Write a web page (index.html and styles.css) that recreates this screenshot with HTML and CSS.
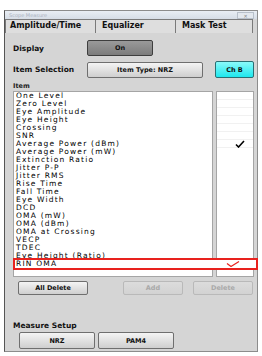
FILE: index.html
```html
<!DOCTYPE html>
<html lang="en">

<head>
    <meta charset="UTF-8">
    <title>Scope Measure</title>
    <link rel="stylesheet" href="styles.css">
</head>

<body>
    <div class="window">
        <!-- Title bar -->
        <div class="titlebar">
            <span class="title">Scope Measure</span>
            <span class="close">&#x2715;</span>
        </div>

        <!-- Tabs -->
        <div class="tabs">
            <div class="tab active">Amplitude/Time</div>
            <div class="tab">Equalizer</div>
            <div class="tab">Mask Test</div>
        </div>

        <div class="content">
            <div class="row">
                <span class="label">Display</span>
                <span class="btn btn-on">On</span>
            </div>

            <div class="row row-sel">
                <span class="label">Item Selection</span>
                <span class="btn btn-type">Item Type: NRZ</span>
                <span class="btn btn-ch">Ch B</span>
            </div>

            <div class="small-label">Item</div>

            <div class="list-area">
                <div class="list">
                    <div class="item">One Level</div>
                    <div class="item">Zero Level</div>
                    <div class="item">Eye Amplitude</div>
                    <div class="item">Eye Height</div>
                    <div class="item">Crossing</div>
                    <div class="item">SNR</div>
                    <div class="item">Average Power (dBm)</div>
                    <div class="item">Average Power (mW)</div>
                    <div class="item">Extinction Ratio</div>
                    <div class="item">Jitter P-P</div>
                    <div class="item">Jitter RMS</div>
                    <div class="item">Rise Time</div>
                    <div class="item">Fall Time</div>
                    <div class="item">Eye Width</div>
                    <div class="item">DCD</div>
                    <div class="item">OMA (mW)</div>
                    <div class="item">OMA (dBm)</div>
                    <div class="item">OMA at Crossing</div>
                    <div class="item">VECP</div>
                    <div class="item">TDEC</div>
                    <div class="item">Eye Height (Ratio)</div>
                </div>
                <div class="checks">
                    <div class="check-row"></div>
                    <div class="check-row"></div>
                    <div class="check-row"></div>
                    <div class="check-row"></div>
                    <div class="check-row"></div>
                    <div class="check-row"></div>
                    <div class="check-row">
                        <svg width="10" height="8" viewBox="0 0 10 8">
                            <path d="M1 4.5 L3.5 7 L9 1" fill="none" stroke="#000" stroke-width="1.6" />
                        </svg>
                    </div>
                </div>

                <!-- highlighted row drawn over the list -->
                <div class="marked">
                    <span class="item">RIN OMA</span>
                    <svg class="red-check" width="14" height="6" viewBox="0 0 14 6">
                        <path d="M1 2.5 L5 5.5 L13 0.5" fill="none" stroke="#e8221e" stroke-width="1.2" />
                    </svg>
                </div>
            </div>

            <div class="actions">
                <span class="btn btn-alldel">All Delete</span>
                <span class="btn btn-add disabled">Add</span>
                <span class="btn btn-del disabled">Delete</span>
            </div>

            <div class="label setup-label">Measure Setup</div>

            <div class="setup">
                <span class="btn btn-setup">NRZ</span>
                <span class="btn btn-setup">PAM4</span>
            </div>
        </div>
    </div>
</body>

</html>
```

FILE: styles.css
```css
* {
    margin: 0;
    padding: 0;
    box-sizing: border-box;
}

body {
    font-family: "DejaVu Sans", sans-serif;
    background-color: #fff;
}

.window {
    margin: 10px 0 0 4px;
    width: 254px;
    height: 342px;
    background-color: #d5d5d5;
    border: 1px solid #8c8c8c;
    border-left-color: #555;
    display: flex;
    flex-direction: column;
}

.titlebar {
    height: 8px;
    display: flex;
    align-items: center;
    justify-content: space-between;
    background: linear-gradient(#e9eef4, #d6dde6);
    padding: 0 3px 0 4px;
}

.title {
    font-size: 5px;
    color: #aab3bf;
}

.close {
    width: 17px;
    height: 7px;
    font-size: 5px;
    line-height: 7px;
    text-align: center;
    color: #888;
    border: 1px solid #b8c0ca;
    background: #e3e8ee;
}

.tabs {
    display: flex;
    height: 14px;
}

.tab {
    height: 14px;
    font-size: 8px;
    font-weight: bold;
    line-height: 12px;
    padding-left: 4px;
    background-color: #dedede;
    border: 1px solid #7a7a7a;
    border-bottom: none;
    color: #111;
}

.tab:nth-child(1) {
    width: 91px;
}

.tab:nth-child(2) {
    width: 80px;
    border-left: none;
    padding-left: 6px;
}

.tab:nth-child(3) {
    width: 77px;
    border-left: none;
    padding-left: 6px;
}

.content {
    padding: 7px 3px 0 8px;
    display: flex;
    flex-direction: column;
}

.row {
    display: flex;
    align-items: center;
    height: 16px;
}

.row-sel {
    margin-top: 5px;
    height: 17px;
}

.label {
    width: 74px;
    font-size: 7.5px;
    font-weight: bold;
    color: #111;
}

.btn {
    display: flex;
    align-items: center;
    justify-content: center;
    font-size: 6.5px;
    font-weight: bold;
    color: #111;
    border: 1px solid #6f6f6f;
    border-radius: 2px;
    background: linear-gradient(#f4f4f4, #cfcfcf);
}

.btn-on {
    width: 66px;
    height: 16px;
    background: linear-gradient(#9a9a9a, #7c7c7c);
    border-color: #3e3e3e;
}

.btn-type {
    width: 116px;
    height: 16px;
}

.btn-ch {
    width: 39px;
    height: 17px;
    margin-left: 12px;
    background: linear-gradient(#8afafa, #1ee8ee);
    border-color: #2a6f73;
}

.small-label {
    margin-top: 4px;
    height: 9px;
    font-size: 6.5px;
    font-weight: bold;
    line-height: 9px;
    color: #222;
}

.list-area {
    position: relative;
    display: flex;
    height: 186px;
}

.list {
    width: 200px;
    background-color: #fff;
    border: 1px solid #a5a5a5;
    overflow: hidden;
}

.item {
    height: 8px;
    line-height: 8px;
    padding-left: 2px;
    font-size: 7.5px;
    letter-spacing: 1.2px;
    color: #000;
    white-space: nowrap;
}

.checks {
    width: 38px;
    margin-left: 3px;
    background-color: #fff;
    border: 1px solid #a5a5a5;
}

.check-row {
    height: 8px;
    display: flex;
    align-items: center;
    justify-content: center;
    border-bottom: 1px solid #f1f1f1;
}

.check-row svg {
    margin-left: 10px;
}

.marked {
    position: absolute;
    left: 0;
    top: 167px;
    width: 245px;
    height: 12px;
    border: 2px solid #e8221e;
    background-color: #fff;
    display: flex;
    align-items: center;
    justify-content: space-between;
    padding-right: 16px;
}

.marked .item {
    padding-left: 1px;
}

.actions {
    display: flex;
    margin-top: 4px;
    padding-left: 5px;
}

.btn-alldel {
    width: 70px;
    height: 14px;
}

.btn-add,
.btn-del {
    width: 60px;
    height: 14px;
}

.btn-add {
    margin-left: 35px;
}

.btn-del {
    margin-left: 10px;
}

.disabled {
    color: #a9a9a9;
    border-color: #b9b9b9;
    background: linear-gradient(#dcdcdc, #d2d2d2);
}

.setup-label {
    width: auto;
    margin-top: 26px;
    height: 9px;
    line-height: 9px;
}

.setup {
    display: flex;
    gap: 3px;
    margin-top: 2px;
    padding-left: 6px;
}

.btn-setup {
    width: 76px;
    height: 17px;
}
```
